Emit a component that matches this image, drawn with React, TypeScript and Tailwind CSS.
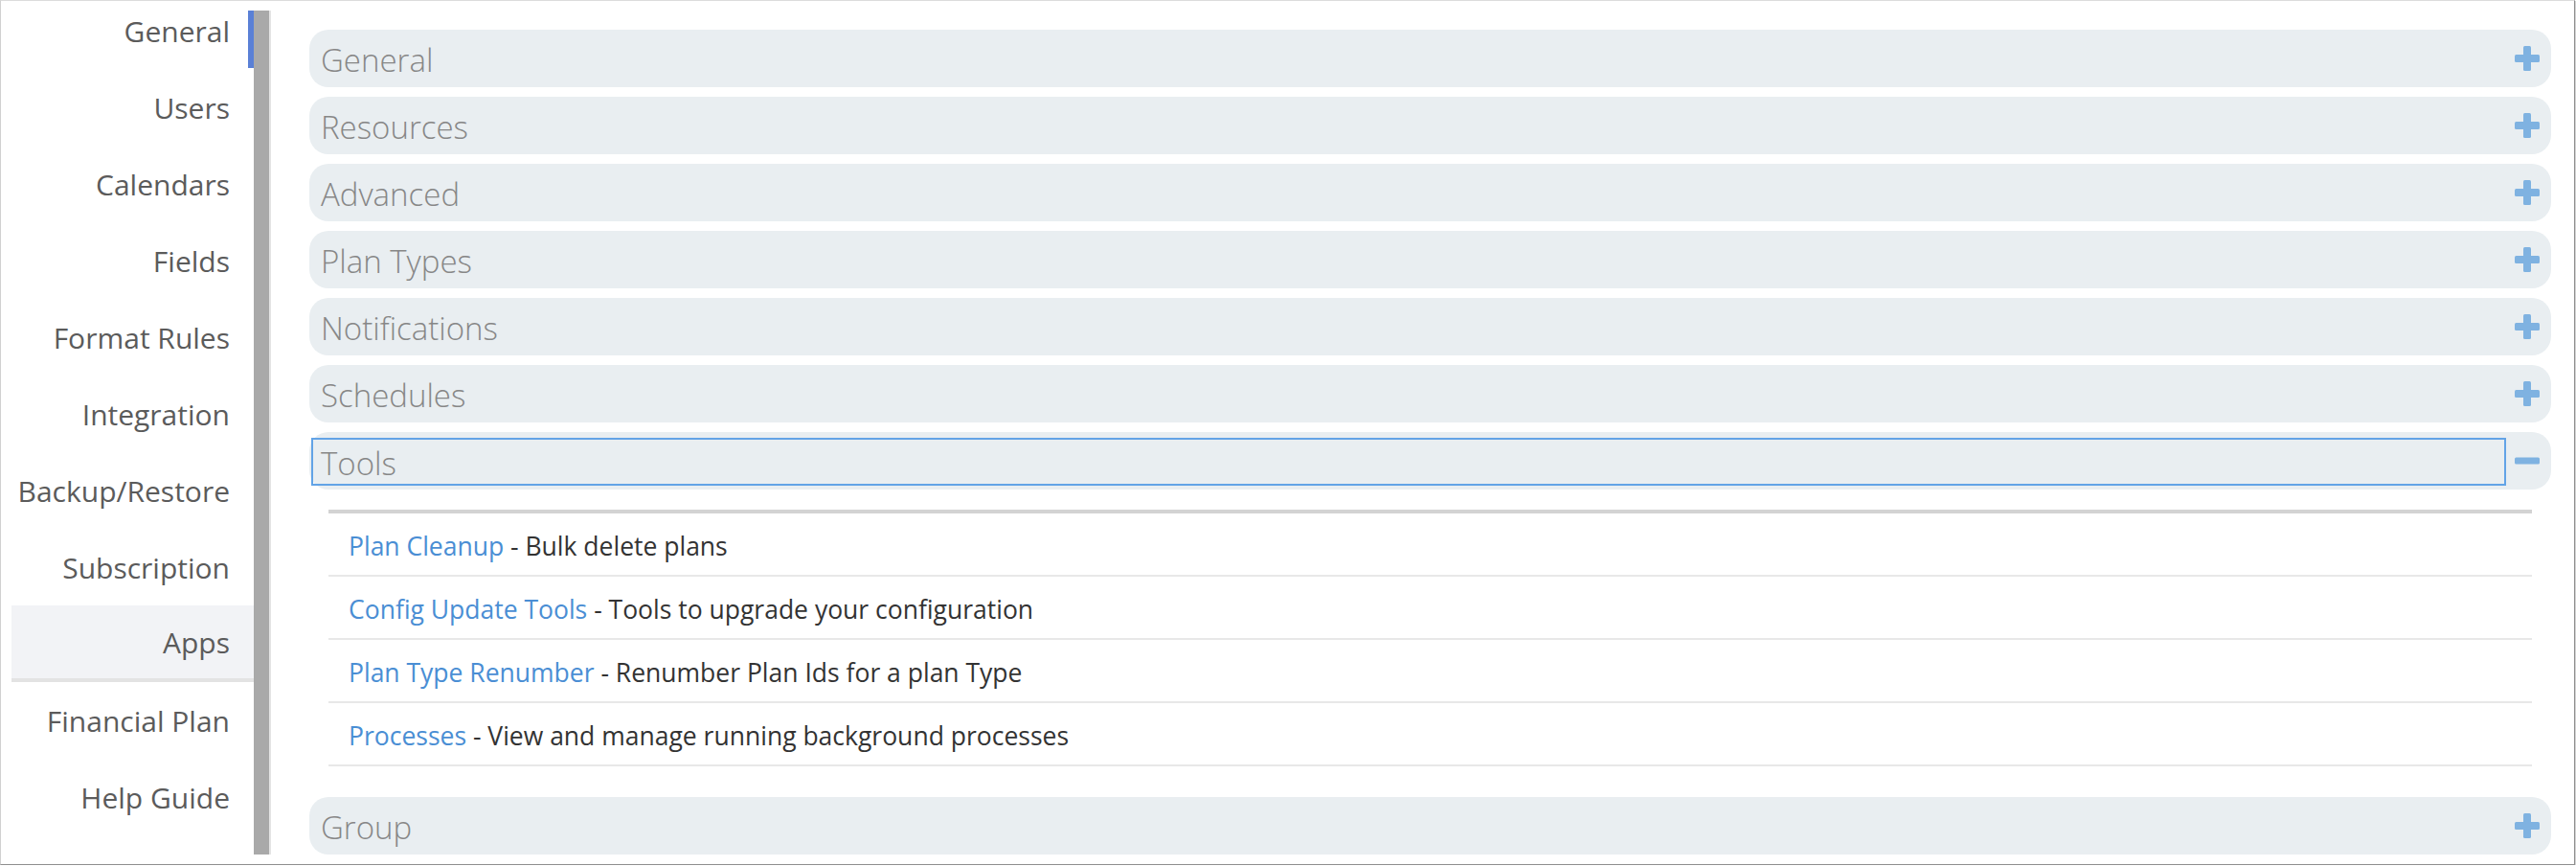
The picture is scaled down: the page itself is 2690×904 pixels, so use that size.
import React from "react";

const navItems = [
  "General",
  "Users",
  "Calendars",
  "Fields",
  "Format Rules",
  "Integration",
  "Backup/Restore",
  "Subscription",
  "Apps",
  "Financial Plan",
  "Help Guide",
];

const sections = [
  "General",
  "Resources",
  "Advanced",
  "Plan Types",
  "Notifications",
  "Schedules",
];

const tools = [
  { name: "Plan Cleanup", desc: "Bulk delete plans" },
  { name: "Config Update Tools", desc: "Tools to upgrade your configuration" },
  { name: "Plan Type Renumber", desc: "Renumber Plan Ids for a plan Type" },
  { name: "Processes", desc: "View and manage running background processes" },
];

function PlusIcon() {
  return (
    <svg width="26" height="26" viewBox="0 0 26 26">
      <rect x="9" y="0" width="8" height="26" rx="1.5" fill="#7fb2e1" />
      <rect x="0" y="9" width="26" height="8" rx="1.5" fill="#7fb2e1" />
    </svg>
  );
}

function MinusIcon() {
  return (
    <svg width="26" height="26" viewBox="0 0 26 26">
      <rect x="0" y="9.5" width="26" height="7" rx="1.5" fill="#7fb2e1" />
    </svg>
  );
}

function SectionHeader({ title, open }: { title: string; open?: boolean }) {
  return (
    <div className="flex h-[60px] shrink-0 items-center rounded-[20px] bg-[#e9eef1] pl-[2px] pr-[12px]">
      <div
        className={
          open
            ? "flex h-[50px] flex-1 items-center border-2 border-[#62a3e6] pl-[8px] pt-[4px] mt-[1px]"
            : "flex h-[50px] flex-1 items-center border-2 border-transparent pl-[8px] pt-[4px]"
        }
      >
        <span className="text-[33px] font-light text-[#878787]">{title}</span>
      </div>
      <div className="ml-[9px] flex w-[26px] items-center">
        {open ? <MinusIcon /> : <PlusIcon />}
      </div>
    </div>
  );
}

export default function App() {
  return (
    <div
      className="flex h-[903px] w-[2689px] overflow-hidden border-t border-l border-r border-b border-t-[#dcdcdc] border-l-[#d0d0d0] border-r-[#8e8e8e] border-b-[#8e8e8e] bg-white shadow-[1px_1px_0_#d4d4d4]"
      style={{ fontFamily: '"Segoe UI", "Open Sans", "Noto Sans", sans-serif' }}
    >
      {/* Side nav */}
      <nav className="w-[264px] shrink-0 pl-[11px]">
        <ul className="-mt-[9px]">
          {navItems.map((item) => {
            const isApps = item === "Apps";
            const isActive = item === "General";
            return (
              <li
                key={item}
                className={
                  isApps
                    ? "box-border flex h-[80px] border-b-4 border-[#e3e3e3] bg-[#f2f3f6]"
                    : "box-border flex h-[80px]"
                }
              >
                <span className="flex flex-1 items-center justify-end pr-[19px] text-[30px] text-[#5b5b5b]">
                  {item}
                </span>
                <span
                  className={
                    isActive
                      ? "mb-[1px] h-[60px] w-[6px] self-end bg-[#5a80d6]"
                      : "w-[6px]"
                  }
                />
              </li>
            );
          })}
        </ul>
      </nav>

      {/* Scroll rail */}
      <div className="flex shrink-0 py-[10px]">
        <div className="w-[16px] bg-[#a9a9a9]" />
        <div className="w-[2px] bg-[#e4e4e4]" />
      </div>

      {/* Main */}
      <main className="flex flex-1 flex-col gap-[10px] overflow-hidden pt-[30px] pl-[40px] pr-[24px]">
        {sections.map((s) => (
          <SectionHeader key={s} title={s} />
        ))}
        <SectionHeader title="Tools" open />

        <div className="mx-[20px] mt-[11px] border-t-4 border-[#d3d3d3]">
          {tools.map((t) => (
            <div
              key={t.name}
              className="flex h-[66px] items-center border-b-2 border-[#e8e8e8] pl-[21px] pt-[6px] text-[26.5px]"
            >
              <span className="text-[#4a8ed4]">{t.name}</span>
              <span className="whitespace-pre text-[#333333]"> - {t.desc}</span>
            </div>
          ))}
        </div>

        <div className="mt-[22px]">
          <SectionHeader title="Group" />
        </div>
      </main>
    </div>
  );
}
